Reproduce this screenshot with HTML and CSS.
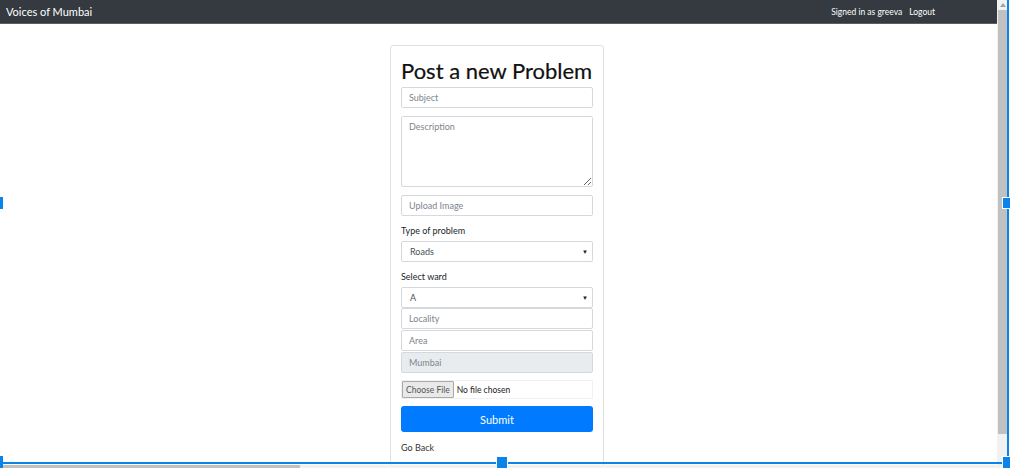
FILE: index.html
```html
<!DOCTYPE html>
<html lang="en">
<head>
<meta charset="utf-8">
<title>Voices of Mumbai</title>
<link rel="stylesheet" href="styles.css">
</head>
<body>
<div class="screen">
  <div class="viewport">
    <div class="page">
      <nav class="navbar">
        <a class="brand" href="#">Voices of Mumbai</a>
        <div class="nav-right">
          <span class="signed">Signed in as greeva</span>
          <a class="logout" href="#">Logout</a>
        </div>
      </nav>
      <main class="main">
        <form class="card">
          <h1 class="title">Post a new Problem</h1>
          <input class="field" type="text" placeholder="Subject">
          <textarea class="field area-field" placeholder="Description"></textarea>
          <input class="field" type="text" placeholder="Upload Image">
          <label class="lbl">Type of problem</label>
          <div class="select"><span>Roads</span><span class="caret">&#9660;</span></div>
          <label class="lbl">Select ward</label>
          <div class="select tight"><span>A</span><span class="caret">&#9660;</span></div>
          <input class="field f-loc" type="text" placeholder="Locality">
          <input class="field f-area" type="text" placeholder="Area">
          <input class="field disabled" type="text" placeholder="Mumbai" disabled>
          <div class="file"><span class="file-btn">Choose File</span><span class="file-txt">No file chosen</span></div>
          <button class="submit" type="button">Submit</button>
          <a class="back" href="#">Go Back</a>
        </form>
      </main>
    </div>
    <div class="vscroll">
      <div class="vs-arrow up"></div>
      <div class="vs-thumb"></div>
      <div class="vs-track"></div>
    </div>
  </div>
  <div class="hscroll"><div class="hs-thumb"></div></div>

  <div class="sel-v"></div>
  <div class="sel-h"></div>
  <div class="handle h-right"></div>
  <div class="handle h-left"></div>
  <div class="handle h-bottom"></div>
  <div class="handle h-bl"></div>
  <div class="handle h-br"></div>
</div>
</body>
</html>
```
FILE: styles.css
```css
* { box-sizing: border-box; }
html, body { margin: 0; padding: 0; background: #fff; }
body { font-family: Lato, "Open Sans", sans-serif; color: #212529; }

.screen { position: relative; width: 1010px; height: 468px; overflow: hidden; }

.viewport { display: flex; height: 465px; width: 1008px; }
.page { flex: 1; display: flex; flex-direction: column; overflow: hidden; }

.navbar {
  height: 24px; flex: none;
  background: #343a40;
  border-bottom: 1px solid #5a5f64;
  display: flex; align-items: center; justify-content: space-between;
  padding: 0 62px 0 6px;
}
.brand { color: #fff; text-decoration: none; font-size: 11px; }
.nav-right { display: flex; gap: 7px; font-size: 8.5px; color: #fff; }
.logout { color: #fff; text-decoration: none; }

.main { flex: 1; display: flex; justify-content: center; padding: 21px 3px 0 0; }
.card {
  width: 214px; height: 460px;
  border: 1px solid #dfe0e1; border-radius: 3px;
  padding: 10px 10px 0 10px;
  display: flex; flex-direction: column;
}
.title {
  margin: 0 0 2px 0;
  font-weight: 400; font-size: 22px; line-height: 29px;
  color: #111; white-space: nowrap;
  -webkit-text-stroke: 0.2px #111;
}

.field {
  display: block; width: 192px; height: 21px;
  border: 1px solid #d5d9dd; border-radius: 2px;
  padding: 0 7px; margin: 0 0 8px 0;
  font-family: inherit; font-size: 9px; color: #495057;
  background: #fff; outline: none;
}
.field::placeholder { color: #7d858c; }
.area-field { height: 71px; padding-top: 4px; resize: vertical; }
.f-loc { margin-bottom: 1px; }
.f-area { margin-bottom: 1px; }
.disabled { background: #e9ecef; border-color: #d5d9dd; margin-bottom: 7px; }
.tight { margin-bottom: 0 !important; }

.lbl { font-size: 9px; line-height: 14px; margin-bottom: 3px; color: #212529; }

.select {
  width: 192px; height: 21px; margin-bottom: 8px;
  border: 1px solid #d5d9dd; border-radius: 2px;
  display: flex; align-items: center; justify-content: space-between;
  padding: 0 4px 0 8px; font-size: 9px; color: #495057;
}
.caret { font-size: 6px; color: #222; }

.file {
  width: 192px; height: 19px; margin-bottom: 7px;
  border: 1px solid #f1f1f1; display: flex; align-items: center; gap: 3px;
  padding-left: 0; font-size: 8.5px;
}
.file-btn {
  height: 17px; padding: 0 3px; display: flex; align-items: center;
  background: #e9e9e9; border: 1px solid #a9a9a9; border-radius: 1px; color: #555;
}
.file-txt { color: #222; }

.submit {
  width: 192px; height: 26px; border: 0; border-radius: 3px;
  background: #007bff; color: #fff;
  font-family: inherit; font-size: 11px; padding: 0;
  margin-bottom: 10px;
}
.back { font-size: 9px; color: #333; text-decoration: none; line-height: 12px; }

.vscroll { width: 11px; flex: none; display: flex; flex-direction: column; background: #f1f1f1; }
.vs-arrow { height: 10px; background: #f1f1f1; position: relative; }
.vs-arrow.up::after {
  content: ""; position: absolute; left: 3px; top: 3px;
  border-left: 3px solid transparent; border-right: 3px solid transparent;
  border-bottom: 4px solid #a3a3a3;
}
.vs-thumb { height: 424px; background: #c1c1c1; margin: 0 1px; }
.vs-track { flex: 1; }

.hscroll { height: 3px; background: #f1f1f1; padding-left: 3px; }
.hs-thumb { width: 297px; height: 3px; background: #c1c1c1; }

.sel-v { position: absolute; left: 1007px; top: 0; width: 2px; height: 468px; background: #0a84e8; }
.sel-h { position: absolute; left: 0; top: 462px; width: 1009px; height: 2px; background: #0a84e8; }
.handle { position: absolute; background: #0a84e8; border: 1px solid #fff; }
.h-right { left: 1002px; top: 197px; width: 9px; height: 12px; }
.h-left { left: -1px; top: 197px; width: 4px; height: 12px; border: 0; }
.h-bottom { left: 496px; top: 456px; width: 12px; height: 13px; }
.h-bl { left: -1px; top: 456px; width: 4px; height: 13px; border: 0; }
.h-br { left: 1002px; top: 456px; width: 9px; height: 13px; }
```
